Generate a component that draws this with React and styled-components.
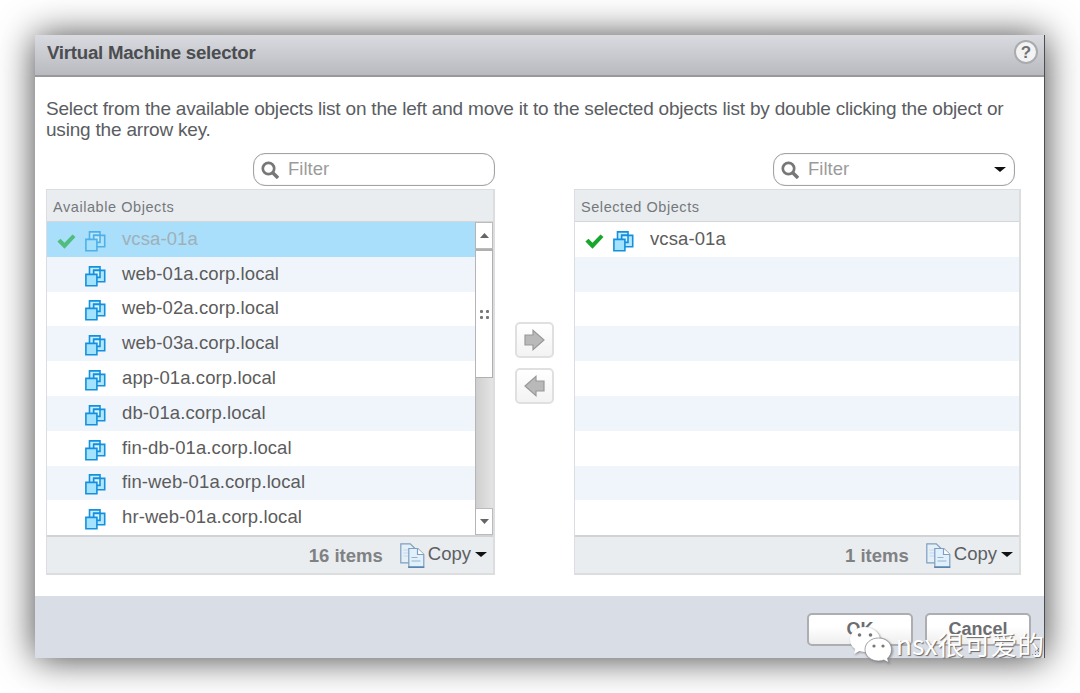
import React from 'react';
import styled, { createGlobalStyle, css } from 'styled-components';

const GlobalStyle = createGlobalStyle`
  * {
    box-sizing: border-box;
  }
  body {
    margin: 0;
    background: #fff;
    font-family: "Liberation Sans", Arial, sans-serif;
    color: #555;
    overflow: hidden;
  }
  svg {
    display: block;
    flex: none;
  }
`;

const Page = styled.div`
  width: 1080px;
  height: 693px;
  padding: 35px 35px 0;
  overflow: hidden;
`;

const Dialog = styled.main`
  position: relative;
  display: flex;
  flex-direction: column;
  width: 1010px;
  height: 623px;
  background: #fff;
  border-right: 1px solid #4c4e51;
  box-shadow: 0 1px 35px rgba(0, 0, 0, 0.74);
`;

const TitleBar = styled.header`
  display: flex;
  justify-content: space-between;
  height: 42px;
  padding: 5px 6px 0 12px;
  background: linear-gradient(#d9dbe0, #b8babf);
  border-bottom: 2px solid #98999d;
  h1 {
    margin: 0;
    padding-top: 1px;
    font-size: 18.7px;
    line-height: 24px;
    letter-spacing: -0.26px;
    color: #4b4d50;
  }
`;

const HelpButton = styled.button`
  width: 24px;
  height: 24px;
  padding: 0;
  border: 2px solid #aaabae;
  border-radius: 50%;
  background: #f3f3f4;
  color: #707174;
  font: bold 17px/19px "Liberation Sans", Arial, sans-serif;
`;

const Content = styled.section`
  flex: 1;
  padding: 21px 23px 0 11px;
`;

const Description = styled.p`
  margin: 0;
  height: 55px;
  font-size: 19px;
  line-height: 21px;
  letter-spacing: -0.2px;
  color: #5a5d62;
  white-space: nowrap;
`;

const Columns = styled.div`
  display: grid;
  grid-template-columns: 449px 79px 447px;
`;

const Column = styled.div`
  display: flex;
  flex-direction: column;
`;

const Filter = styled.div`
  display: flex;
  align-items: center;
  align-self: flex-end;
  width: 242px;
  height: 33px;
  margin: 0 ${({ $inset }) => $inset || 0}px 3px 0;
  padding: 0 8px 0 7px;
  border: 1px solid #a3a3a3;
  border-radius: 12px;
  box-shadow: inset 0 0 1px #aaa;
  font-size: 18.5px;
  color: #9b9b9b;
  span {
    flex: 1;
    margin-left: 9px;
    line-height: 20px;
    padding-bottom: 1px;
  }
`;

const Panel = styled.div`
  height: 386px;
  border: 2px solid #dbdddf;
  border-top-width: 1px;
  border-left-width: 1px;
  background: #fff;
`;

const PanelHeader = styled.div`
  height: 32px;
  padding-left: 6px;
  border-bottom: 1px solid #d3d7da;
  background: #e9edf0;
  font-size: 14.5px;
  letter-spacing: 0.56px;
  line-height: 34px;
  color: #75787b;
`;

const ListArea = styled.div`
  display: flex;
  height: 313px;
`;

const List = styled.ul`
  flex: 1;
  margin: 0;
  padding: 0;
  list-style: none;
`;

const Row = styled.li`
  display: flex;
  align-items: center;
  height: 34.8px;
  padding-left: 9px;
  font-size: 18.5px;
  letter-spacing: 0.1px;
  color: #5c5c5c;
  background: ${({ $odd }) => ($odd ? '#f0f5fb' : '#fff')};
  span {
    margin-left: 16px;
    padding-bottom: 1px;
  }
  ${({ $picked }) =>
    $picked &&
    css`
      background: #a9dffb;
      color: #9fb0b8;
      svg {
        opacity: 0.6;
      }
    `}
`;

const CheckSlot = styled.i`
  width: 29px;
  padding: 5px 0 0 1px;
`;

const IconSlot = styled.i`
  padding-top: 4px;
`;

const ScrollBar = styled.div`
  display: flex;
  flex-direction: column;
  width: 18px;
  background: linear-gradient(90deg, #cfcfcf, #e4e4e4);
  border-left: 1px solid #b5b5b5;
`;

const ScrollButton = styled.div`
  display: flex;
  align-items: center;
  justify-content: center;
  height: 27px;
  background: #fff;
  border: 1px solid #bbb;
  border-left: 0;
`;

const Thumb = styled.div`
  display: grid;
  grid-template-columns: 3px 3px;
  gap: 3px;
  place-content: center;
  height: 129px;
  margin-bottom: auto;
  background: #fff;
  border: 1px solid #b0b0b0;
  border-top: 2px solid #b0b0b0;
  border-left: 0;
  i {
    width: 3px;
    height: 3px;
    border-radius: 1px;
    background: #777;
  }
`;

const PanelFooter = styled.div`
  display: flex;
  justify-content: flex-end;
  height: 38px;
  padding: 6px 6px 0 0;
  border-top: 2px solid #d0d3d5;
  background: #e9edf0;
  font-size: 18.5px;
  b {
    margin-right: 17px;
    padding-top: 2px;
    line-height: 22px;
    font-size: 18.5px;
    color: #808183;
  }
  span {
    display: flex;
    align-items: center;
    gap: 4px;
    height: 22px;
    margin-left: 3px;
    color: #5c6063;
  }
`;

const Movers = styled.div`
  display: flex;
  flex-direction: column;
  align-items: center;
  gap: 10px;
  padding-top: 169px;
`;

const MoveButton = styled.button`
  display: flex;
  align-items: center;
  justify-content: center;
  width: 39px;
  height: 36px;
  padding: 0;
  border: 2px solid #e0e0e0;
  border-radius: 5px;
  background: linear-gradient(#fff, #f3f3f3);
`;

const ButtonBar = styled.footer`
  display: flex;
  justify-content: flex-end;
  gap: 12px;
  height: 62px;
  padding: 17px 13px 0 0;
  background: #d9dde5;
`;

const Button = styled.button`
  width: 106px;
  height: 33px;
  padding: 0;
  border: 2px solid #acaeb1;
  border-radius: 5px;
  background: linear-gradient(#fff 40%, #eee);
  color: #6b6d70;
  font: bold 18px/27px "Liberation Sans", Arial, sans-serif;
`;

const Grip = styled.div`
  position: absolute;
  right: 0;
  bottom: 2px;
  width: 13px;
  height: 15px;
  background: radial-gradient(#777 35%, transparent 45%) 0 0 / 3px 3px;
  clip-path: polygon(100% 0, 100% 100%, 0 100%);
`;

const Watermark = styled.div`
  position: absolute;
  right: 0;
  bottom: -5px;
  display: flex;
  align-items: center;
  gap: 4px;
  color: #fff;
  font: 400 26.6px/38px "Noto Sans CJK SC", sans-serif;
  white-space: nowrap;
  text-shadow: 1px 1px 1px #666;
  svg {
    filter: drop-shadow(1px 1px 1px #888);
  }
`;

const SearchIcon = () => (
  <svg width="18" height="18" viewBox="0 0 18 18" fill="none" stroke="#777">
    <circle cx="7.5" cy="7.5" r="5.7" strokeWidth="2.7" />
    <path d="M12 12l5 5" strokeWidth="3.4" />
  </svg>
);

const Caret = ({ up, color = '#111', width = 12 }) => (
  <svg width={width} height="5" viewBox="0 0 12 5" preserveAspectRatio="none" fill={color}>
    <path d={up ? 'M0 5l6-5 6 5z' : 'M0 0h12L6 5z'} />
  </svg>
);

const CheckIcon = () => (
  <svg width="19" height="15" viewBox="0 0 19 15">
    <path d="M.4 7.400L3.500 4.700l4 4L15.500.5l3 2.400L7.500 14.700z" fill="#16a72c" />
  </svg>
);

const VmIcon = () => (
  <svg width="21" height="21" viewBox="0 0 21 21" stroke="#1590dc" strokeWidth="1.6">
    <path d="M4.500.9h10.500v10.500H4.500z" fill="#c3eeff" />
    <path d="M8.700 4.400h11v11.400h-11z" fill="#b5e8ff" />
    <path d="M8.700 4.400H15v7H8.700z" fill="#dcf6ff" />
    <path d="M.9 8.400h11v11.400H.9z" fill="#a3e3ff" />
  </svg>
);

const CopyIcon = () => (
  <svg width="25" height="25" viewBox="0 0 25 25" stroke="#7f9fc0" strokeWidth="1.2">
    <path d="M.8.8h9.500l5 5v14H.8z" fill="#e4eff8" />
    <path d="M3.500 7h5M3.500 10h5M3.500 13h5" stroke="#c3d8e9" />
    <path d="M8.800 5.500h9l6 6v12.700h-15z" fill="#e2f0fb" />
    <path d="M17.500 5.500v6h6.300" fill="#fff" />
    <path d="M11.500 14.500h6M11.500 18h9" stroke="#8fb3d2" />
    <path d="M8.200 24.200h16" stroke="#5884ad" strokeWidth="1.600" />
  </svg>
);

const ArrowIcon = ({ left }) => (
  <svg width="21" height="22" viewBox="0 0 21 22">
    <path
      d="M1 6h8V1.300L20 11 9 20.700V16H1z"
      fill="#b9b9b9"
      stroke="#999"
      strokeWidth="1.200"
      transform={left ? 'matrix(-1 0 0 1 21 0)' : undefined}
    />
  </svg>
);

const WechatIcon = () => (
  <svg width="43" height="37" viewBox="0 0 43 37" fill="#fff">
    <path d="M15.500 1C7 1 1 6.600 1 13.500c0 4 2 7.300 5.200 9.600L5 28l5.500-3c2 .7 4.500 1 6.500 1 10 0 14-6 14-12.500S24 1 15.500 1z" />
    <path
      d="M29.500 12C22 12 16 17 16 23.500S22 35 29.500 35c2 0 3.700-.4 5.300-1l5 2.800-1.300-4.500c2.400-2 4-5 4-8.800C42.500 17 37 12 29.500 12z"
      stroke="#8a8c90"
      strokeWidth=".8"
    />
    <g fill="#777">
      <circle cx="10.500" cy="9" r="1.800" />
      <circle cx="21.500" cy="9" r="1.800" />
      <circle cx="25" cy="20" r="1.600" />
      <circle cx="34" cy="20" r="1.600" />
    </g>
  </svg>
);

const available = [
  'vcsa-01a',
  'web-01a.corp.local',
  'web-02a.corp.local',
  'web-03a.corp.local',
  'app-01a.corp.local',
  'db-01a.corp.local',
  'fin-db-01a.corp.local',
  'fin-web-01a.corp.local',
  'hr-web-01a.corp.local',
];
const selected = ['vcsa-01a'];

const ObjectRow = ({ name, index, picked }) => (
  <Row $odd={index % 2 === 1} $picked={picked}>
    {name && (
      <>
        <CheckSlot>{selected.includes(name) && <CheckIcon />}</CheckSlot>
        <IconSlot>
          <VmIcon />
        </IconSlot>
        <span>{name}</span>
      </>
    )}
  </Row>
);

const Summary = ({ count }) => (
  <PanelFooter>
    <b>{count} items</b>
    <CopyIcon />
    <span>
      Copy
      <Caret />
    </span>
  </PanelFooter>
);

export default function App() {
  return (
    <Page>
      <GlobalStyle />
      <Dialog>
        <TitleBar>
          <h1>Virtual Machine selector</h1>
          <HelpButton>?</HelpButton>
        </TitleBar>
        <Content>
          <Description>
            Select from the available objects list on the left and move it to the selected objects list by double clicking the object or
            <br />
            using the arrow key.
          </Description>
          <Columns>
            <Column>
              <Filter>
                <SearchIcon />
                <span>Filter</span>
              </Filter>
              <Panel>
                <PanelHeader>Available Objects</PanelHeader>
                <ListArea>
                  <List>
                    {available.map((name, index) => (
                      <ObjectRow key={name} name={name} index={index} picked={index === 0} />
                    ))}
                  </List>
                  <ScrollBar>
                    <ScrollButton>
                      <Caret up color="#666" width={9} />
                    </ScrollButton>
                    <Thumb>
                      <i />
                      <i />
                      <i />
                      <i />
                    </Thumb>
                    <ScrollButton>
                      <Caret color="#666" width={9} />
                    </ScrollButton>
                  </ScrollBar>
                </ListArea>
                <Summary count={16} />
              </Panel>
            </Column>
            <Movers>
              <MoveButton>
                <ArrowIcon />
              </MoveButton>
              <MoveButton>
                <ArrowIcon left />
              </MoveButton>
            </Movers>
            <Column>
              <Filter $inset={6}>
                <SearchIcon />
                <span>Filter</span>
                <Caret />
              </Filter>
              <Panel>
                <PanelHeader>Selected Objects</PanelHeader>
                <ListArea>
                  <List>
                    {available.map((slot, index) => (
                      <ObjectRow key={slot} name={selected[index]} index={index} />
                    ))}
                  </List>
                </ListArea>
                <Summary count={1} />
              </Panel>
            </Column>
          </Columns>
        </Content>
        <ButtonBar>
          <Button>OK</Button>
          <Button>Cancel</Button>
        </ButtonBar>
        <Grip />
        <Watermark>
          <WechatIcon />
          nsx很可爱的
        </Watermark>
      </Dialog>
    </Page>
  );
}
